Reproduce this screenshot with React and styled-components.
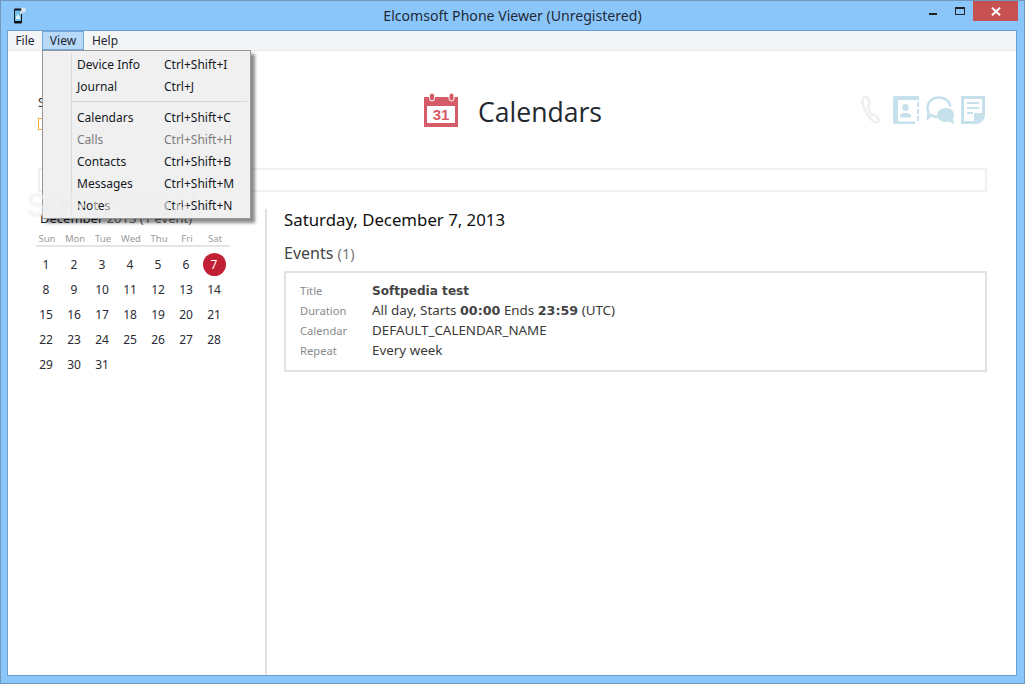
import React from 'react';
import styled, { createGlobalStyle } from 'styled-components';

const GlobalStyle = createGlobalStyle`
html, body {
  margin: 0;
  padding: 0;
  background: #8bc6fb;
}
* { box-sizing: border-box; }
`;

const Window = styled.div`
position: relative;
width: 1025px;
height: 684px;
display: flex;
flex-direction: column;
background: #8bc6fb;
border: 1px solid #7097c0;
overflow: hidden;
font-family: "Noto Sans", "Liberation Sans", sans-serif;
color: #333;
`;

const TitleBar = styled.div`
height: 28px;
flex: none;
display: grid;
grid-template-columns: 1fr auto 1fr;
`;

const AppIcon = styled.div`
padding: 6px 0 0 12px;
`;

const Title = styled.div`
font-size: 14.1px;
line-height: 29px;
color: #1f2a36;
`;

const Controls = styled.div`
display: flex;
justify-content: flex-end;
align-items: flex-start;
padding-right: 6px;
`;

const MinButton = styled.div`
width: 8px;
height: 2px;
margin: 12px 18px 0 0;
background: #222;
`;

const MaxButton = styled.div`
width: 10px;
height: 8px;
margin: 6px 8px 0 0;
border: 1px solid #222;
border-top-width: 2px;
`;

const CloseButton = styled.div`
width: 45px;
height: 20px;
background: #c75050;
color: #fff;
display: flex;
align-items: center;
justify-content: center;
`;

const Client = styled.div`
position: relative;
flex: 1;
margin: 1px 7px 7px 6px;
background: #fff;
border: 1px solid #6e9fd0;
display: flex;
flex-direction: column;
min-height: 0;
`;

const MenuBar = styled.div`
height: 20px;
flex: none;
display: flex;
background: #f4f5f7;
border-bottom: 1px solid #e8e9eb;
font-size: 12px;
color: #1c2530;
`;

const MenuTitle = styled.div`
width: ${p => p.$width}px;
height: 19px;
line-height: 18px;
text-align: center;
border: 1px solid ${p => (p.$open ? '#6fa8dc' : 'transparent')};
background: ${p => (p.$open ? '#b9d9f8' : 'transparent')};
`;

const Dropdown = styled.div`
position: absolute;
left: 34px;
top: 19px;
width: 209px;
height: 169px;
padding: 2px 0 0 0;
background: #f0f0f0;
border: 1px solid #979797;
box-shadow: 4px 4px 3px rgba(0, 0, 0, 0.45);
z-index: 2;
font-size: 12px;
&::before {
  content: '';
  position: absolute;
  left: 28px;
  top: 2px;
  bottom: 2px;
  width: 1px;
  background: #dcdcdc;
}
`;

const DropItem = styled.div`
height: 22px;
display: grid;
grid-template-columns: 87px 1fr;
align-items: center;
padding-left: 34px;
color: ${p => (p.$disabled ? '#7c7c7c' : '#15191f')};
`;

const DropSeparator = styled.div`
height: 1px;
margin: 4px 3px 4px 29px;
background: #d6d6d6;
`;

const Header = styled.div`
height: 117px;
flex: none;
display: grid;
grid-template-columns: 1fr auto 1fr;
padding: 0 30px 0 32px;
`;

const DeviceInfo = styled.div`
margin-left: -2px;
padding-top: 43px;
font-size: 12px;
color: #333;
`;

const DeviceLink = styled.div`
width: 60px;
height: 12px;
margin-top: 7px;
border: 1px solid #f0a830;
`;

const PageHeading = styled.div`
display: flex;
align-items: center;
gap: 20px;
padding-top: 42px;
height: 76px;
`;

const PageTitle = styled.h1`
margin: 4px 0 0 0;
font-family: "Open Sans", "Noto Sans", sans-serif;
font-size: 26.6px;
font-weight: 400;
line-height: 36px;
color: #23282f;
`;

const ModeIcons = styled.div`
display: flex;
justify-content: flex-end;
align-items: flex-start;
padding: 45px 1px 0 0;
gap: 7px;
`;

const PhoneSlot = styled.div`
margin-right: 5px;
`;

const SearchBox = styled.div`
height: 24px;
flex: none;
margin: 0 29px 0 30px;
border: 2px solid #f0f0f0;
`;

const Body = styled.div`
flex: 1;
display: grid;
grid-template-columns: 259px 1fr;
margin-top: 17px;
min-height: 0;
`;

const Sidebar = styled.div`
padding-left: 28px;
border-right: 2px solid #e0e0e0;
`;

const MonthHeading = styled.div`
height: 20px;
padding-left: 4px;
font-size: 13px;
line-height: 19px;
color: #666;
b {
  font-weight: 400;
  color: #15191f;
}
`;

const WeekHeader = styled.div`
width: 194px;
height: 18px;
display: grid;
grid-template-columns: repeat(7, 28px);
border-bottom: 2px solid #e4e4e4;
`;

const WeekDay = styled.div`
margin-left: -6px;
font-size: 9.5px;
line-height: 20px;
text-align: center;
color: #9a9a9a;
`;

const DaysGrid = styled.div`
display: grid;
grid-template-columns: repeat(7, 28px);
grid-auto-rows: 25px;
margin: 5px 0 0 -4px;
`;

const Day = styled.div`
display: flex;
align-items: center;
justify-content: center;
font-size: 12px;
color: #2c2c34;
`;

const SelectedDay = styled.div`
width: 23px;
height: 23px;
border-radius: 50%;
display: flex;
align-items: center;
justify-content: center;
background: #c11f33;
color: #fff;
`;

const Main = styled.div`
padding: 0 29px 0 17px;
`;

const DateHeading = styled.div`
font-size: 16.8px;
line-height: 22px;
color: #111;
`;

const EventsHeading = styled.div`
margin-top: 11px;
font-size: 16px;
line-height: 22px;
color: #444;
span {
  font-size: 14.5px;
  color: #777;
}
`;

const EventCard = styled.div`
height: 101px;
margin-top: 7px;
padding: 7px 14px;
border: 2px solid #e2e2e2;
`;

const EventRow = styled.div`
height: 20px;
display: grid;
grid-template-columns: 72px 1fr;
align-items: center;
font-size: 13.4px;
color: #3a3a3a;
b {
  font-family: "DejaVu Sans", sans-serif;
  font-size: 12.7px;
  font-weight: 700;
  color: #444;
}
`;

const EventTitle = styled.div`
margin-top: 2px;
font-family: "DejaVu Sans", sans-serif;
font-size: 12.1px;
font-weight: 700;
color: #444;
`;

const EventLabel = styled.div`
font-size: 11.2px;
color: #8a8a8a;
`;

const Watermark = styled.div`
position: absolute;
left: 19px;
top: 156px;
z-index: 3;
pointer-events: none;
font-family: "Liberation Sans", sans-serif;
font-size: 35px;
font-weight: 700;
line-height: 36px;
transform: scaleX(0.82);
transform-origin: left top;
color: rgba(255, 255, 255, 0.55);
text-shadow: 0 0 1px rgba(0, 0, 0, 0.08);
sup {
  font-size: 9px;
  font-weight: 400;
  vertical-align: 18px;
  line-height: 0;
}
`;

const weekDays = ['Sun', 'Mon', 'Tue', 'Wed', 'Thu', 'Fri', 'Sat'];
const blue = '#c6e1eb';

function PhoneGlyph() {
  return (
    <svg width="20" height="28" viewBox="0 0 20 28">
      <path
        d="M3 1.5 C1 3 1 6 2 9 C4 15 8 22 13 26 C15 27 18 26 18.5 24 L13.5 18.5 L11.5 19.5 C9 17 7 12 7 9.5 L9 8.5 L6.5 1 Z"
        fill="none"
        stroke="#efefef"
        strokeWidth="2.4"
        strokeLinejoin="round"
      />
    </svg>
  );
}

function ContactsGlyph() {
  return (
    <svg width="26" height="28" viewBox="0 0 26 28">
      <path d="M2 0H26V4H5V25.5H21V4H24V28H2A2 2 0 0 1 0 26V2A2 2 0 0 1 2 0Z" fill={blue} />
      <rect x="21" y="4" width="3" height="24" fill="#fff" />
      <rect x="21" y="25.5" width="1" height="2.5" fill={blue} />
      <rect x="24" y="6" width="2" height="5" fill={blue} />
      <rect x="24" y="13" width="2" height="5" fill={blue} />
      <rect x="24" y="20" width="2" height="5" fill={blue} />
      <circle cx="12.5" cy="11.5" r="3.4" fill={blue} />
      <path d="M7 21.5V19.5C7 17.5 10 17 12.5 17S18 17.5 18 19.5V21.5Z" fill={blue} />
    </svg>
  );
}

function ChatGlyph() {
  return (
    <svg width="28" height="28" viewBox="0 0 28 28">
      <path
        d="M16 20.5 C11 21.5 7 20.5 5 19 L2 22 L2.5 16 C0 11 2.5 1.5 12.5 1.5 C20 1.5 24 6 24 10.5"
        fill="none"
        stroke={blue}
        strokeWidth="2.5"
      />
      <path d="M20 12 C25 12 28 15 28 19 C28 21 27.5 22 27 23 L28 28 L23 25.5 C17 27 11 24 11 19 C11 15 15 12 20 12Z" fill={blue} />
    </svg>
  );
}

function NotesGlyph() {
  return (
    <svg width="24" height="28" viewBox="0 0 24 28">
      <path d="M0 0H24V19C24 24 19 28 15 28H0Z" fill={blue} />
      <path d="M3 3H21V17H16A2 2 0 0 0 13 19V25H3Z" fill="#fff" />
      <rect x="6" y="6" width="12" height="2" fill={blue} />
      <rect x="6" y="11" width="12" height="2" fill={blue} />
      <rect x="6" y="16" width="6" height="2" fill={blue} />
    </svg>
  );
}

function CalendarGlyph() {
  return (
    <svg width="34" height="34" viewBox="0 0 34 34">
      <rect x="0" y="4" width="34" height="30" fill="#d55c68" />
      <rect x="3" y="13" width="28" height="17" fill="#fff" />
      <rect x="5.5" y="0" width="5" height="8" rx="2.5" fill="#d55c68" stroke="#fff" strokeWidth="1" />
      <rect x="25" y="0" width="5" height="8" rx="2.5" fill="#d55c68" stroke="#fff" strokeWidth="1" />
      <text x="17" y="27" textAnchor="middle" fontFamily="Liberation Sans, sans-serif" fontSize="15" fontWeight="700" fill="#d55c68">31</text>
    </svg>
  );
}

function AppGlyph() {
  return (
    <svg width="16" height="18" viewBox="0 0 16 18">
      <rect x="1" y="1.5" width="8" height="15" rx="1.2" fill="#111" />
      <rect x="2" y="3.5" width="6" height="10.5" fill="#6fc3ea" />
      <path d="M3 10 L5 7 L7 10 V12 H3Z" fill="#dff2fb" />
      <circle cx="10.5" cy="3" r="2.4" fill="#dfe8ee" />
      <rect x="7" y="4" width="2" height="3" fill="#cdd8df" />
    </svg>
  );
}

function CloseGlyph() {
  return (
    <svg width="10" height="9" viewBox="0 0 10 9">
      <path d="M1 0.8 L9 8.2 M9 0.8 L1 8.2" stroke="#fff" strokeWidth="2" fill="none" />
    </svg>
  );
}

const App = () => {
  const days = [];
  for (let i = 1; i <= 31; i++) days.push(i);

  return (
    <Window>
      <GlobalStyle />
      <TitleBar>
        <AppIcon><AppGlyph /></AppIcon>
        <Title>Elcomsoft Phone Viewer (Unregistered)</Title>
        <Controls>
          <MinButton />
          <MaxButton />
          <CloseButton><CloseGlyph /></CloseButton>
        </Controls>
      </TitleBar>

      <Client>
        <MenuBar>
          <MenuTitle $width={34}>File</MenuTitle>
          <MenuTitle $width={42} $open>View</MenuTitle>
          <MenuTitle $width={42}>Help</MenuTitle>
        </MenuBar>

        {/* View menu, opened over the page */}
        <Dropdown>
          <DropItem><span>Device Info</span><span>Ctrl+Shift+I</span></DropItem>
          <DropItem><span>Journal</span><span>Ctrl+J</span></DropItem>
          <DropSeparator />
          <DropItem><span>Calendars</span><span>Ctrl+Shift+C</span></DropItem>
          <DropItem $disabled><span>Calls</span><span>Ctrl+Shift+H</span></DropItem>
          <DropItem><span>Contacts</span><span>Ctrl+Shift+B</span></DropItem>
          <DropItem><span>Messages</span><span>Ctrl+Shift+M</span></DropItem>
          <DropItem><span>Notes</span><span>Ctrl+Shift+N</span></DropItem>
        </Dropdown>

        <Header>
          <DeviceInfo>
            Softpedia
            <DeviceLink />
          </DeviceInfo>
          <PageHeading>
            <CalendarGlyph />
            <PageTitle>Calendars</PageTitle>
          </PageHeading>
          <ModeIcons>
            <PhoneSlot><PhoneGlyph /></PhoneSlot>
            <ContactsGlyph />
            <ChatGlyph />
            <NotesGlyph />
          </ModeIcons>
        </Header>

        <SearchBox />

        <Body>
          <Sidebar>
            <MonthHeading><b>December</b> 2013 (1 event)</MonthHeading>
            <WeekHeader>
              {weekDays.map(d => <WeekDay key={d}>{d}</WeekDay>)}
            </WeekHeader>
            <DaysGrid>
              {days.map(d => (
                <Day key={d}>{d === 7 ? <SelectedDay>{d}</SelectedDay> : d}</Day>
              ))}
            </DaysGrid>
          </Sidebar>
          <Main>
            <DateHeading>Saturday, December 7, 2013</DateHeading>
            <EventsHeading>Events <span>(1)</span></EventsHeading>
            <EventCard>
              <EventRow><EventLabel>Title</EventLabel><EventTitle>Softpedia test</EventTitle></EventRow>
              <EventRow>
                <EventLabel>Duration</EventLabel>
                <div>All day, Starts <b>00:00</b> Ends <b>23:59</b> (UTC)</div>
              </EventRow>
              <EventRow><EventLabel>Calendar</EventLabel><div>DEFAULT_CALENDAR_NAME</div></EventRow>
              <EventRow><EventLabel>Repeat</EventLabel><div>Every week</div></EventRow>
            </EventCard>
          </Main>
        </Body>

        <Watermark>SOFTPEDIA<sup>®</sup></Watermark>
      </Client>
    </Window>
  );
};

export default App;
